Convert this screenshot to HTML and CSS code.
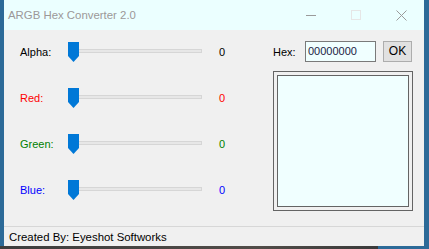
FILE: index.html
```html
<!DOCTYPE html>
<html lang="en">
<head>
    <meta charset="UTF-8">
    <title>ARGB Hex Converter 2.0</title>
    <link rel="stylesheet" href="styles.css">
</head>
<body>
    <div class="desktop">
        <div class="window">
            <div class="titlebar">
                <span class="title">ARGB Hex Converter 2.0</span>
                <div class="caption-buttons">
                    <span class="cap-btn">
                        <svg width="11" height="11" viewBox="0 0 11 11"><line x1="0" y1="5.5" x2="10" y2="5.5" stroke="#9a9a9a" stroke-width="1"/></svg>
                    </span>
                    <span class="cap-btn">
                        <svg width="11" height="11" viewBox="0 0 11 11"><rect x="0.5" y="0.5" width="9" height="9" fill="none" stroke="#e6e6e6" stroke-width="1"/></svg>
                    </span>
                    <span class="cap-btn">
                        <svg width="11" height="11" viewBox="0 0 11 11"><path d="M0.5 0.5 L10.5 10.5 M10.5 0.5 L0.5 10.5" stroke="#9a9a9a" stroke-width="1"/></svg>
                    </span>
                </div>
            </div>
            <div class="client">
                <div class="main">
                    <div class="channels">
                        <div class="channel alpha">
                            <label>Alpha:</label>
                            <div class="slider">
                                <div class="track"></div>
                                <svg class="thumb" width="11" height="20" viewBox="0 0 11 20"><path d="M0 0 H11 V14 L5.5 20 L0 14 Z" fill="#0078d7"/></svg>
                            </div>
                            <span class="value">0</span>
                        </div>
                        <div class="channel red">
                            <label>Red:</label>
                            <div class="slider">
                                <div class="track"></div>
                                <svg class="thumb" width="11" height="20" viewBox="0 0 11 20"><path d="M0 0 H11 V14 L5.5 20 L0 14 Z" fill="#0078d7"/></svg>
                            </div>
                            <span class="value">0</span>
                        </div>
                        <div class="channel green">
                            <label>Green:</label>
                            <div class="slider">
                                <div class="track"></div>
                                <svg class="thumb" width="11" height="20" viewBox="0 0 11 20"><path d="M0 0 H11 V14 L5.5 20 L0 14 Z" fill="#0078d7"/></svg>
                            </div>
                            <span class="value">0</span>
                        </div>
                        <div class="channel blue">
                            <label>Blue:</label>
                            <div class="slider">
                                <div class="track"></div>
                                <svg class="thumb" width="11" height="20" viewBox="0 0 11 20"><path d="M0 0 H11 V14 L5.5 20 L0 14 Z" fill="#0078d7"/></svg>
                            </div>
                            <span class="value">0</span>
                        </div>
                    </div>
                    <div class="output">
                        <div class="hex-row">
                            <label>Hex:</label>
                            <div class="hex-input">00000000</div>
                            <div class="ok-btn">OK</div>
                        </div>
                        <div class="preview">
                            <div class="preview-color"></div>
                        </div>
                    </div>
                </div>
                <div class="statusbar">Created By: Eyeshot Softworks</div>
            </div>
        </div>
        <div class="taskbar-edge"></div>
    </div>
</body>
</html>
```

FILE: styles.css
```css
body {
    margin: 0;
    padding: 0;
    background-color: #2c6a98;
    font-family: 'Liberation Sans', Arial, sans-serif;
    color: #000;
}
.desktop {
    width: 429px;
    height: 249px;
    display: flex;
    flex-direction: column;
    overflow: hidden;
}
.window {
    margin-left: 4px;
    width: 420px;
    height: 246px;
    background-color: #f0f0f0;
    display: flex;
    flex-direction: column;
}
.titlebar {
    height: 30px;
    background-color: #ebffff;
    display: flex;
    align-items: center;
    padding-left: 4px;
}
.title {
    font-size: 11.4px;
    color: #9c9898;
}
.caption-buttons {
    margin-left: auto;
    display: flex;
}
.cap-btn {
    width: 45px;
    height: 30px;
    display: flex;
    align-items: center;
    justify-content: center;
}
.client {
    flex: 1;
    display: flex;
    flex-direction: column;
}
.main {
    flex: 1;
    display: flex;
}
.channels {
    width: 253px;
    padding: 12px 0 0 16px;
}
.channel {
    display: flex;
    align-items: center;
    height: 20px;
    margin-bottom: 26px;
    font-size: 11px;
}
.channel label {
    width: 48px;
}
.slider {
    position: relative;
    width: 134px;
    height: 20px;
}
.track {
    position: absolute;
    left: 4px;
    right: 0;
    top: 7px;
    height: 2px;
    background-color: #e7e7e7;
    border: 1px solid #d6d6d6;
}
.thumb {
    position: absolute;
    left: 0;
    top: 0;
    display: block;
}
.value {
    margin-left: 17px;
}
.red { color: #ff0000; }
.green { color: #008000; }
.blue { color: #0000ff; }
.output {
    padding-top: 11px;
}
.hex-row {
    display: flex;
    align-items: center;
    height: 21px;
}
.hex-row label {
    width: 32px;
    font-size: 11px;
}
.hex-input {
    width: 67px;
    height: 19px;
    border: 1px solid #7a7a7a;
    background-color: #f0ffff;
    font-size: 11px;
    line-height: 19px;
    padding-left: 2px;
    color: #1c1c44;
}
.ok-btn {
    margin-left: 7px;
    width: 27px;
    height: 19px;
    border: 1px solid #adadad;
    background-color: #e1e1e1;
    font-size: 12px;
    line-height: 19px;
    text-align: center;
}
.preview {
    margin-top: 9px;
    width: 132px;
    height: 132px;
    padding: 3px;
    border: 1px solid #646464;
}
.preview-color {
    width: 130px;
    height: 130px;
    border: 1px solid #646464;
    background-color: #f0ffff;
}
.statusbar {
    height: 21px;
    border-top: 1px solid #d7d7d7;
    padding-left: 5px;
    font-size: 11.4px;
    line-height: 21px;
}
.taskbar-edge {
    height: 3px;
    background: linear-gradient(to right, #3d3d3d 0, #514c48 60%, #3a3a3a 88%, #2c6a98 88%);
}
```
